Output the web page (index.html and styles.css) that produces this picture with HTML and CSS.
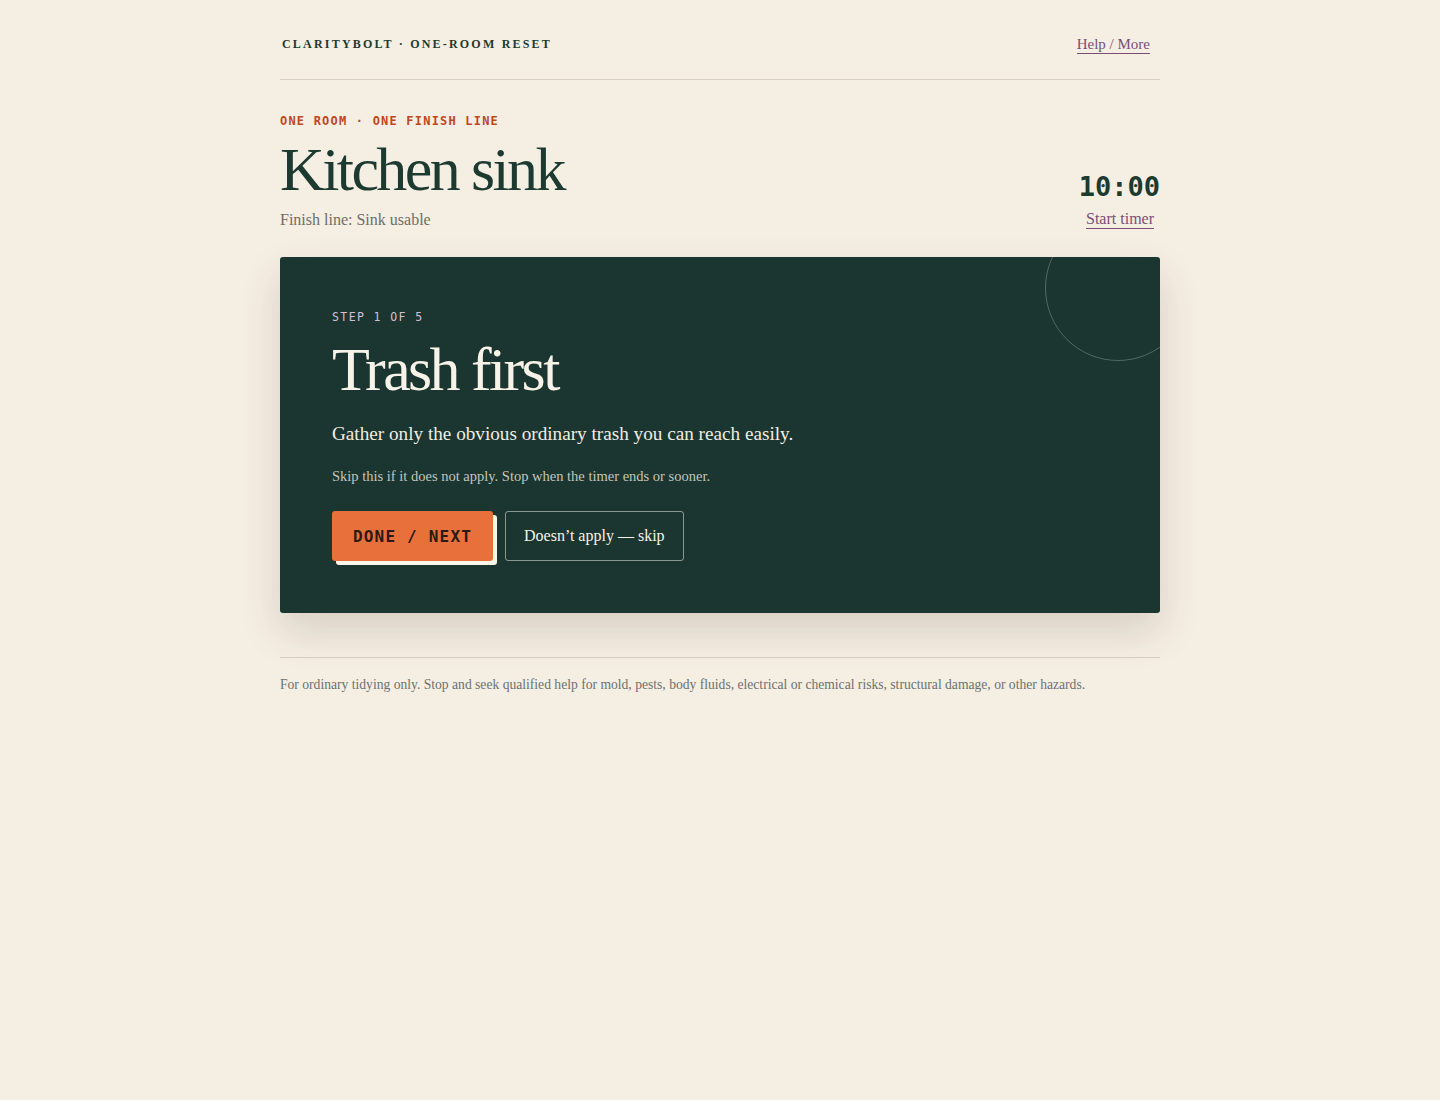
FILE: index.html
```html
<!DOCTYPE html>
<html lang="en">
<head>
<meta charset="utf-8">
<title>ClarityBolt · One-Room Reset</title>
<link rel="stylesheet" href="styles.css">
</head>
<body>
<div class="page">
  <header class="topbar">
    <div class="brand">ClarityBolt · One-Room Reset</div>
    <a class="help" href="#">Help / More</a>
  </header>

  <section class="intro">
    <div class="intro-left">
      <div class="eyebrow">One room · one finish line</div>
      <h1 class="room">Kitchen sink</h1>
      <p class="finish">Finish line: Sink usable</p>
    </div>
    <div class="timer">
      <div class="clock">10:00</div>
      <a class="start" href="#">Start timer</a>
    </div>
  </section>

  <section class="card">
    <div class="ring"></div>
    <div class="step">Step 1 of 5</div>
    <h2 class="task">Trash first</h2>
    <p class="lead">Gather only the obvious ordinary trash you can reach easily.</p>
    <p class="note">Skip this if it does not apply. Stop when the timer ends or sooner.</p>
    <div class="actions">
      <button class="btn-done">DONE / NEXT</button>
      <button class="btn-skip">Doesn’t apply — skip</button>
    </div>
  </section>

  <footer class="foot">
    For ordinary tidying only. Stop and seek qualified help for mold, pests, body fluids, electrical or chemical risks, structural damage, or other hazards.
  </footer>
</div>
</body>
</html>
```

FILE: styles.css
```css
* { box-sizing: border-box; }
html, body { margin: 0; padding: 0; }
body {
  background: #f5eee3;
  font-family: "Liberation Serif", "Times New Roman", serif;
  color: #1c3a30;
  min-height: 1100px;
}
.page {
  width: 880px;
  margin: 0 auto;
}
.topbar {
  display: flex;
  justify-content: space-between;
  align-items: center;
  height: 80px;
  padding: 10px 10px 0 2px;
  border-bottom: 1px solid #d8d0c2;
}
.brand {
  font-size: 12px;
  font-weight: 700;
  letter-spacing: 2.2px;
  text-transform: uppercase;
  color: #1c3a30;
}
.help {
  font-size: 15px;
  color: #7a4f73;
  text-decoration: none;
  border-bottom: 1px solid #7a4f73;
  line-height: 17px;
}
.intro {
  display: flex;
  justify-content: space-between;
  align-items: flex-end;
  padding-top: 34px;
}
.eyebrow {
  font-family: "DejaVu Sans Mono", "Liberation Mono", monospace;
  font-size: 12px;
  font-weight: 700;
  letter-spacing: 1.2px;
  text-transform: uppercase;
  color: #c0461c;
  line-height: 14px;
}
.room {
  margin: 10px 0 0;
  font-weight: 400;
  font-size: 62px;
  line-height: 62px;
  letter-spacing: -2.6px;
  color: #1c3a30;
}
.finish {
  margin: 10px 0 0;
  font-size: 16px;
  line-height: 20px;
  color: #6e6d66;
}
.timer {
  display: flex;
  flex-direction: column;
  align-items: flex-end;
  margin-bottom: 1px;
}
.clock {
  font-family: "DejaVu Sans Mono", "Liberation Mono", monospace;
  font-size: 27px;
  font-weight: 700;
  line-height: 30px;
  color: #1c3a30;
}
.start {
  margin-top: 8px;
  margin-right: 6px;
  font-size: 16px;
  line-height: 18px;
  color: #7a4f73;
  text-decoration: none;
  border-bottom: 1px solid #7a4f73;
}
.card {
  position: relative;
  overflow: hidden;
  margin-top: 27px;
  background: #1b3530;
  border-radius: 3px;
  padding: 52px 52px 52px;
  box-shadow: 0 18px 40px rgba(60, 50, 30, 0.16);
  color: #f7f3e8;
}
.ring {
  position: absolute;
  width: 146px;
  height: 146px;
  border-radius: 50%;
  border: 1px solid rgba(180, 200, 190, 0.35);
  left: 765px;
  top: -42px;
}
.step {
  font-family: "DejaVu Sans Mono", "Liberation Mono", monospace;
  font-size: 11.5px;
  letter-spacing: 1.4px;
  text-transform: uppercase;
  color: #d6bfd2;
  line-height: 16px;
}
.task {
  margin: 12px 0 0;
  font-weight: 400;
  font-size: 62px;
  line-height: 64px;
  letter-spacing: -2.6px;
  color: #f7f3e8;
}
.lead {
  margin: 21px 0 0;
  font-size: 19.2px;
  line-height: 24px;
  color: #f1ede2;
}
.note {
  margin: 20px 0 0;
  font-size: 14.5px;
  line-height: 20px;
  color: #c3c6bd;
}
.actions {
  display: flex;
  gap: 12px;
  margin-top: 25px;
}
.btn-done {
  height: 50px;
  width: 161px;
  border: 0;
  border-radius: 3px;
  background: #e8703a;
  color: #2a1a12;
  font-family: "DejaVu Sans Mono", "Liberation Mono", monospace;
  font-size: 16px;
  font-weight: 700;
  letter-spacing: 1.2px;
  box-shadow: 4px 4px 0 #fbf6ea;
  cursor: pointer;
}
.btn-skip {
  height: 50px;
  padding: 0 18px;
  background: transparent;
  border: 1px solid rgba(210, 220, 212, 0.6);
  border-radius: 3px;
  color: #f7f3e8;
  font-family: "Liberation Serif", "Times New Roman", serif;
  font-size: 16px;
  cursor: pointer;
}
.foot {
  margin-top: 44px;
  border-top: 1px solid #d8d0c2;
  padding-top: 18px;
  font-size: 13.6px;
  line-height: 18px;
  color: #6b7270;
}
```
